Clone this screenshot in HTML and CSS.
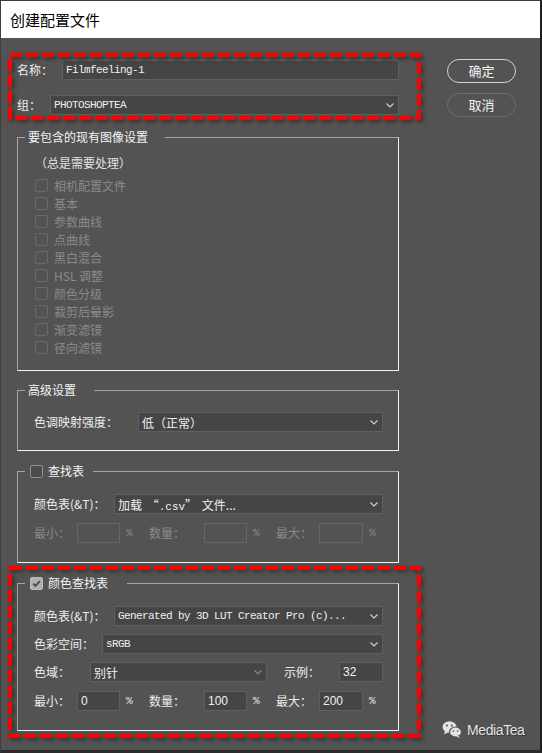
FILE: index.html
```html
<!DOCTYPE html>
<html lang="zh">
<head>
<meta charset="utf-8">
<title>创建配置文件</title>
<link rel="stylesheet" href="styles.css">
</head>
<body>
<div class="window">
  <div class="titlebar">创建配置文件</div>
  <div class="content">
    <div class="main">
      <div class="row">
        <span class="lbl w-name">名称：</span>
        <div class="field grow mono">Filmfeeling-1</div>
      </div>
      <div class="row group-row">
        <span class="lbl w-group">组：</span>
        <div class="field select grow mono"><span>PHOTOSHOPTEA</span><svg class="chev" width="8" height="5" viewBox="0 0 8 5"><path d="M0.5 0.5 L4 4 L7.5 0.5" fill="none" stroke="#cfcfcf" stroke-width="1.2"/></svg></div>
      </div>

      <fieldset class="box box-include">
        <legend class="lg lg-include">要包含的现有图像设置</legend>
        <div class="box-body body-include">
          <div class="note">（总是需要处理）</div>
          <ul class="checklist">
            <li><span class="cb cb-off"></span>相机配置文件</li>
            <li><span class="cb cb-off"></span>基本</li>
            <li><span class="cb cb-off"></span>参数曲线</li>
            <li><span class="cb cb-off"></span>点曲线</li>
            <li><span class="cb cb-off"></span>黑白混合</li>
            <li><span class="cb cb-off"></span>HSL 调整</li>
            <li><span class="cb cb-off"></span>颜色分级</li>
            <li><span class="cb cb-off"></span>裁剪后晕影</li>
            <li><span class="cb cb-off"></span>渐变滤镜</li>
            <li><span class="cb cb-off"></span>径向滤镜</li>
          </ul>
        </div>
      </fieldset>

      <fieldset class="box box-adv">
        <legend class="lg lg-adv">高级设置</legend>
        <div class="box-body">
          <div class="row first-row">
            <span class="lbl w-tone">色调映射强度：</span>
            <div class="field select grow"><span>低（正常）</span><svg class="chev" width="8" height="5" viewBox="0 0 8 5"><path d="M0.5 0.5 L4 4 L7.5 0.5" fill="none" stroke="#cfcfcf" stroke-width="1.2"/></svg></div>
          </div>
        </div>
      </fieldset>

      <fieldset class="box box-lut">
        <legend class="lg lg-check lg-lut"><span class="cb cb-on-off"></span>查找表</legend>
        <div class="box-body">
          <div class="row first-row">
            <span class="lbl w-table">颜色表(&amp;T)：</span>
            <div class="field select grow"><span class="csv">加载 “<span class="mono">.csv</span>” 文件...</span><svg class="chev" width="8" height="5" viewBox="0 0 8 5"><path d="M0.5 0.5 L4 4 L7.5 0.5" fill="none" stroke="#cfcfcf" stroke-width="1.2"/></svg></div>
          </div>
          <div class="row num-row disabled">
            <span class="lbl w-min">最小：</span>
            <div class="field num off"></div>
            <span class="pct">%</span>
            <span class="lbl w-amt">数量：</span>
            <div class="field num off"></div>
            <span class="pct">%</span>
            <span class="lbl w-min">最大：</span>
            <div class="field num wide off"></div>
            <span class="pct">%</span>
          </div>
        </div>
      </fieldset>

      <fieldset class="box box-clut">
        <legend class="lg lg-check lg-clut"><span class="cb cb-on"><svg width="11" height="11" viewBox="0 0 11 11"><path d="M2.2 5.6 L4.5 7.9 L8.8 3.2" fill="none" stroke="#4a4a4a" stroke-width="1.8"/></svg></span>颜色查找表</legend>
        <div class="box-body">
          <div class="row first-row">
            <span class="lbl w-table">颜色表(&amp;T)：</span>
            <div class="field select grow mono"><span>Generated by 3D LUT Creator Pro (c)...</span><svg class="chev" width="8" height="5" viewBox="0 0 8 5"><path d="M0.5 0.5 L4 4 L7.5 0.5" fill="none" stroke="#cfcfcf" stroke-width="1.2"/></svg></div>
          </div>
          <div class="row next-row">
            <span class="lbl w-space">色彩空间：</span>
            <div class="field select grow mono"><span>sRGB</span><svg class="chev" width="8" height="5" viewBox="0 0 8 5"><path d="M0.5 0.5 L4 4 L7.5 0.5" fill="none" stroke="#cfcfcf" stroke-width="1.2"/></svg></div>
          </div>
          <div class="row next-row">
            <span class="lbl w-gamut">色域：</span>
            <div class="field select gamut"><span>别针</span><svg class="chev" width="8" height="5" viewBox="0 0 8 5"><path d="M0.5 0.5 L4 4 L7.5 0.5" fill="none" stroke="#8a8a8a" stroke-width="1.2"/></svg></div>
            <span class="lbl w-sample">示例：</span>
            <div class="field num wide digits">32</div>
          </div>
          <div class="row num-row">
            <span class="lbl w-min">最小：</span>
            <div class="field num digits">0</div>
            <span class="pct">%</span>
            <span class="lbl w-amt">数量：</span>
            <div class="field num digits">100</div>
            <span class="pct">%</span>
            <span class="lbl w-min">最大：</span>
            <div class="field num wide digits">200</div>
            <span class="pct">%</span>
          </div>
        </div>
      </fieldset>
    </div>

    <div class="buttons">
      <button class="btn btn-ok">确定</button>
      <button class="btn btn-cancel">取消</button>
    </div>
  </div>

  <svg class="annot" width="540" height="749" viewBox="0 0 540 749">
    <rect x="9" y="54" width="409" height="63" fill="none" stroke="#ff0000" stroke-width="4" stroke-dasharray="12 4"/>
    <rect x="9" y="567" width="409" height="168" fill="none" stroke="#ff0000" stroke-width="4" stroke-dasharray="12 4"/>
  </svg>

  <div class="watermark">
    <svg width="20" height="17" viewBox="0 0 20 17">
      <ellipse cx="7.5" cy="6" rx="7" ry="5.8" fill="#e4e4e4"/>
      <path d="M3 10 L2 13.5 L6.5 11 Z" fill="#e4e4e4"/>
      <ellipse cx="13.5" cy="11" rx="6" ry="5" fill="#e4e4e4" stroke="#535353" stroke-width="1.2"/>
      <path d="M16.2 14.8 L18.2 16.8 L14.2 15.8 Z" fill="#e4e4e4"/>
      <circle cx="5" cy="4.6" r="1" fill="#535353"/>
      <circle cx="9.8" cy="4.6" r="1" fill="#535353"/>
      <circle cx="11.4" cy="10" r="0.85" fill="#535353"/>
      <circle cx="15.6" cy="10" r="0.85" fill="#535353"/>
    </svg>
    <span>MediaTea</span>
  </div>
</div>
</body>
</html>
```
FILE: styles.css
```css
* { box-sizing: border-box; }
html, body { margin: 0; padding: 0; }
body {
  width: 542px;
  height: 753px;
  overflow: hidden;
  background: #535353;
  font-family: "Noto Sans CJK SC", "Noto Sans", sans-serif;
  font-size: 12px;
  color: #ececec;
}
.window {
  position: relative;
  width: 542px;
  height: 753px;
  background: #535353;
  border-top: 1px solid #3a3a3a;
  border-left: 1px solid #3e3e3e;
  border-right: 2px solid #1f1f1f;
  border-bottom: 3px solid #2b2b2b;
}
.titlebar {
  height: 37px;
  background: #ffffff;
  color: #000000;
  font-size: 15px;
  line-height: 37px;
  padding-left: 9px;
}
.content {
  display: flex;
  padding: 22px 0 0 16px;
}
.main { width: 382px; }

.row {
  display: flex;
  align-items: center;
  height: 20px;
}
.group-row { margin-top: 15px; }
.lbl {
  flex: none;
  line-height: 20px;
  color: #eeeeee;
  white-space: nowrap;
}
.w-name { width: 45px; }
.w-group { width: 33px; }
.w-tone { width: 104px; }
.w-table { width: 80px; }
.w-space { width: 68px; }
.w-gamut { width: 56px; }
.w-sample { width: 72px; padding-left: 17px; }
.w-min { width: 43px; }
.w-amt { width: 55px; }

.field {
  height: 20px;
  background: #454545;
  border: 1px solid #5f5f5f;
  display: flex;
  align-items: center;
  padding-left: 3px;
  color: #f0f0f0;
  white-space: nowrap;
  overflow: hidden;
}
.grow { flex: 1; }
.select { justify-content: space-between; padding-right: 4px; }
.chev { flex: none; }
.gamut { width: 177px; flex: none; }
.mono {
  font-family: "Liberation Mono", monospace;
  font-size: 11px;
  letter-spacing: -0.6px;
}
.csv { word-spacing: 2px; }
.csv .mono { letter-spacing: 0; }
.num { width: 43px; flex: none; }
.num.wide { width: 44px; }
.digits {
  font-family: "Liberation Sans", sans-serif;
  font-size: 12px;
  padding-left: 3px;
}
.field.off {
  background: #535353;
  border-color: #666666;
}
.pct {
  flex: none;
  width: 29px;
  padding-left: 6px;
  font-family: "Liberation Mono", monospace;
  font-size: 11px;
  color: #e8e8e8;
}
.disabled .lbl, .disabled .pct { color: #8a8a8a; }

/* group boxes */
.box {
  margin: 12px 0 0;
  padding: 0 15px 0 7px;
  min-width: 0;
  border: 1px solid;
  border-color: #a4a4a4 #f2f2f2 #f2f2f2 #a4a4a4;
}
.box-include { margin-top: 14px; padding-bottom: 14px; }
.box-adv { margin-top: 11px; padding-bottom: 18px; }
.box-lut { padding-bottom: 19px; }
.box-clut { padding-bottom: 19px; }

.lg {
  height: 16px;
  line-height: 16px;
  padding: 0 17px 0 3px;
  color: #f4f4f4;
  font-size: 12px;
}
.lg-adv { padding-right: 18px; }
.lg-check {
  display: flex;
  align-items: center;
  gap: 5px;
  padding-left: 5px;
}
.lg-lut { padding-right: 9px; }
.lg-clut { padding-right: 19px; }

.box-body { padding-left: 9px; }
.body-include { padding-left: 10px; }
.first-row { margin-top: 15px; }
.box-adv .first-row { margin-top: 14px; }
.next-row { margin-top: 8px; }
.num-row { margin-top: 9px; }

.note {
  margin-top: 9px;
  line-height: 18px;
  color: #e2e2e2;
}
.checklist {
  list-style: none;
  margin: 4px 0 0;
  padding: 0;
}
.checklist li {
  display: flex;
  align-items: center;
  height: 18px;
  color: #8a8a8a;
}
.cb {
  flex: none;
  width: 13px;
  height: 13px;
  border-radius: 2px;
  display: inline-flex;
  align-items: center;
  justify-content: center;
}
.cb-off {
  border: 1px solid #696969;
  margin-right: 6px;
}
.cb-on-off {
  border: 1px solid #909090;
  background: #4c4c4c;
}
.cb-on {
  background: #b0b0b0;
  border: 1px solid #bcbcbc;
}

/* buttons */
.buttons {
  margin-left: 48px;
  margin-top: -1px;
  display: flex;
  flex-direction: column;
  gap: 10px;
}
.btn {
  width: 69px;
  height: 24px;
  border-radius: 12px;
  background: transparent;
  color: #f2f2f2;
  font-family: "Noto Sans CJK SC", sans-serif;
  font-size: 13px;
  line-height: 20px;
  padding: 0;
}
.btn-ok { border: 1.5px solid #d2d2d2; }
.btn-cancel { border: 1.5px solid #6e6e6e; }

/* annotation overlay */
.annot {
  position: absolute;
  left: 0;
  top: 0;
  pointer-events: none;
  filter: drop-shadow(2px 2px 2px rgba(0, 0, 0, 0.45));
}

/* watermark overlay */
.watermark {
  position: absolute;
  left: 441px;
  top: 720px;
  display: flex;
  align-items: center;
  gap: 5px;
  color: #e2e2e2;
  font-family: "Liberation Sans", sans-serif;
  font-size: 14px;
  letter-spacing: -0.4px;
  text-shadow: 1px 1px 1px rgba(0, 0, 0, 0.35);
}
```
